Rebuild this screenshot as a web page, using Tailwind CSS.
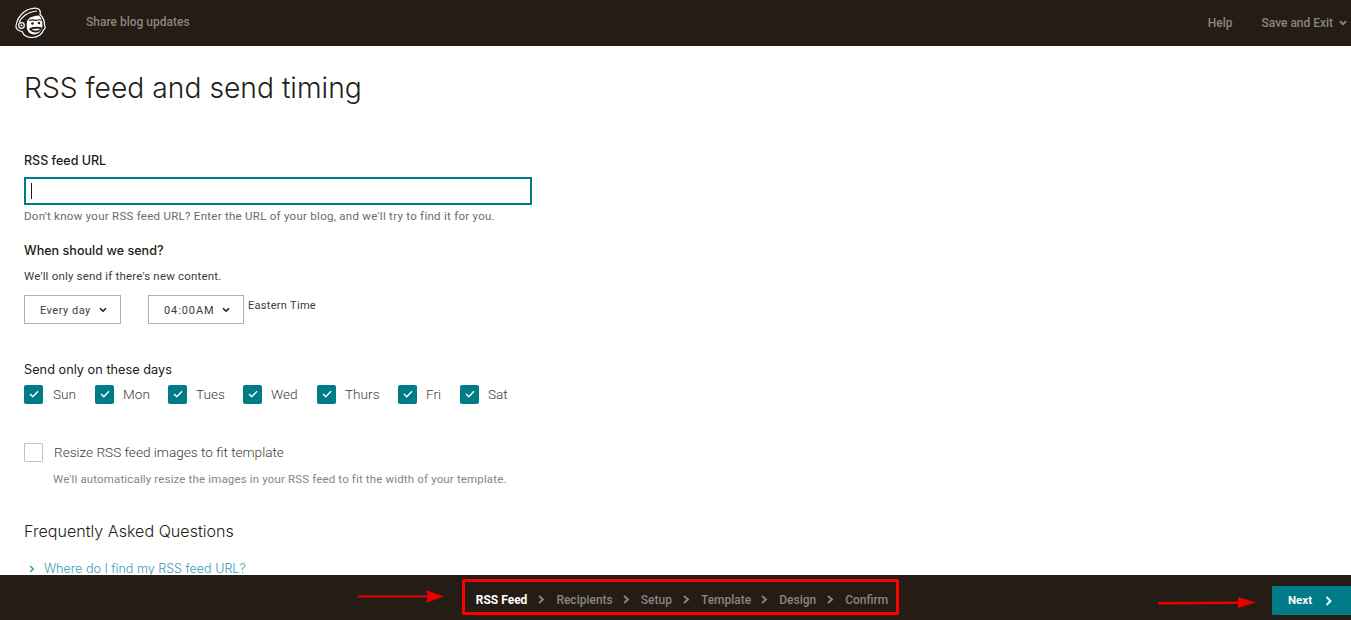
<!DOCTYPE html>
<html lang="en">
<head>
<meta charset="utf-8">
<title>RSS feed and send timing</title>
<script src="https://cdn.jsdelivr.net/npm/@tailwindcss/browser@4"></script>
</head>
<body class="font-['Roboto',sans-serif] bg-white text-[#241c15]">
<div class="relative flex flex-col h-[620px] w-[1351px] overflow-hidden">
  <header class="h-[46px] shrink-0 bg-[#241c15] flex items-center text-[#8a8580] text-[12px] font-medium">
    <svg class="ml-[14px] w-[32px] h-[32px] -mt-[1px]" viewBox="0 0 32 32" fill="none">
      <path d="M8 24.500C4 24 1.500 21.500 2 18.500C2.600 14.500 5 9 10 5C14 2 20 .5 23.500 1.500C26.500 2.500 26.500 5.500 26 7.500C29 10 30.500 14 30.500 18C31.500 20 31 22 29.500 23C28.500 27 24 30.500 18 30.500C13 30.500 9.500 28 8 24.500Z" stroke="#fff" stroke-width="1.200" fill="#241c15"/>
      <path d="M5 15.500C7 10.500 13 5 23 4" stroke="#fff" stroke-width="1.200"/>
      <path d="M14 12.500C17 9.500 21 8.500 25 8.500C27.500 11 28.500 14 28.500 18.500C28 23.500 25 27.500 19.500 27.500C16 27 13.500 25 13 21.500C12.500 18 12.500 14.500 14 12.500Z" fill="#fff"/>
      <path d="M15 13.500C17.500 12.300 20 12.800 22 13.500C24 12.500 26 12.500 28 13.500" stroke="#241c15" stroke-width="1.200"/>
      <circle cx="18.500" cy="16.500" r="1.300" fill="#241c15"/>
      <circle cx="25" cy="16" r="1.300" fill="#241c15"/>
      <path d="M15 22C17 19.500 24 19 28 20.500C27 24.500 24 26 20.500 25.500C18 25 16 24 15 22Z" fill="#241c15"/>
      <path d="M17.500 22.500C20 21.500 24 21.500 26 22C25 23.500 20 24.500 17.500 22.500Z" fill="#fff"/>
      <circle cx="7.500" cy="18.500" r="2.800" stroke="#fff" stroke-width="1.200"/>
      <circle cx="7.500" cy="18.500" r=".9" fill="#fff"/>
    </svg>
    <span class="ml-[40px] -mt-[2px]">Share blog updates</span>
    <div class="ml-auto flex items-center pr-[4px]">
      <span>Help</span>
      <span class="ml-[29px] tracking-[-0.02px]">Save and Exit</span>
      <svg class="ml-[6px] w-[8px] h-[6px]" viewBox="0 0 8 6" fill="none"><path d="M1 1.200L4 4.200L7 1.200" stroke="#8a8580" stroke-width="2"/></svg>
    </div>
  </header>

  <main class="flex-1 min-h-0 overflow-hidden pl-[24px]">
    <h1 class="mt-[23px] text-[28.250px] leading-[38px] font-light font-['Inter',sans-serif]">RSS feed and send timing</h1>

    <label class="block mt-[44px] text-[12.500px] leading-[20px] font-medium font-['Inter',sans-serif]">RSS feed URL</label>
    <div class="mt-[6px] w-[508px] h-[28px] border-2 border-[#007c89] flex items-center pl-[5px]">
      <span class="w-px h-[16px] bg-[#241c15]"></span>
    </div>
    <p class="mt-[2px] text-[11.500px] leading-[18px] text-[#6e6a66] tracking-[0.27px]">Don't know your RSS feed URL? Enter the URL of your blog, and we'll try to find it for you.</p>

    <h2 class="mt-[16px] text-[12.600px] leading-[20px] font-medium font-['Inter',sans-serif]">When should we send?</h2>
    <p class="mt-[6px] text-[11.500px] leading-[18px] text-[#403b37] tracking-[0.19px]">We'll only send if there's new content.</p>

    <div class="mt-[10px] flex items-start text-[11px] text-[#403b37] tracking-[0.3px]">
      <div class="w-[97px] h-[29px] border border-[#b3b0ad] flex items-center pl-[15px]">
        <span class="tracking-[0.5px] pt-[3px]">Every day</span>
        <svg class="ml-[8px] w-[8px] h-[6px]" viewBox="0 0 8 6" fill="none"><path d="M1 1.200L4 4.200L7 1.200" stroke="#241c15" stroke-width="1.600"/></svg>
      </div>
      <div class="ml-[27px] w-[96px] h-[29px] border border-[#b3b0ad] flex items-center pl-[15px]">
        <span class="tracking-[0.9px] pt-[3px]">04:00AM</span>
        <svg class="ml-[8px] w-[8px] h-[6px]" viewBox="0 0 8 6" fill="none"><path d="M1 1.200L4 4.200L7 1.200" stroke="#241c15" stroke-width="1.600"/></svg>
      </div>
      <span class="ml-[4px] leading-[18px] mt-[2px] text-[#403b37]">Eastern Time</span>
    </div>

    <h2 class="mt-[36px] text-[12.750px] leading-[20px] font-['Inter',sans-serif]">Send only on these days</h2>
    <div class="mt-[4px] flex items-center text-[13.600px] leading-[20px] text-[#403b37] font-light">
      <span class="w-[19px] h-[19px] bg-[#007c89] rounded-[2px] flex items-center justify-center"><svg class="w-[10px] h-[8px]" viewBox="0 0 10 8" fill="none"><path d="M1 4L3.800 6.800L9 1.200" stroke="#fff" stroke-width="1.400"/></svg></span>
      <span class="ml-[10px] w-[42px]">Sun</span>
      <span class="w-[19px] h-[19px] bg-[#007c89] rounded-[2px] flex items-center justify-center"><svg class="w-[10px] h-[8px]" viewBox="0 0 10 8" fill="none"><path d="M1 4L3.800 6.800L9 1.200" stroke="#fff" stroke-width="1.400"/></svg></span>
      <span class="ml-[9px] w-[45px]">Mon</span>
      <span class="w-[19px] h-[19px] bg-[#007c89] rounded-[2px] flex items-center justify-center"><svg class="w-[10px] h-[8px]" viewBox="0 0 10 8" fill="none"><path d="M1 4L3.800 6.800L9 1.200" stroke="#fff" stroke-width="1.400"/></svg></span>
      <span class="ml-[9px] w-[47px]">Tues</span>
      <span class="w-[19px] h-[19px] bg-[#007c89] rounded-[2px] flex items-center justify-center"><svg class="w-[10px] h-[8px]" viewBox="0 0 10 8" fill="none"><path d="M1 4L3.800 6.800L9 1.200" stroke="#fff" stroke-width="1.400"/></svg></span>
      <span class="ml-[9px] w-[46px]">Wed</span>
      <span class="w-[19px] h-[19px] bg-[#007c89] rounded-[2px] flex items-center justify-center"><svg class="w-[10px] h-[8px]" viewBox="0 0 10 8" fill="none"><path d="M1 4L3.800 6.800L9 1.200" stroke="#fff" stroke-width="1.400"/></svg></span>
      <span class="ml-[9px] w-[53px]">Thurs</span>
      <span class="w-[19px] h-[19px] bg-[#007c89] rounded-[2px] flex items-center justify-center"><svg class="w-[10px] h-[8px]" viewBox="0 0 10 8" fill="none"><path d="M1 4L3.800 6.800L9 1.200" stroke="#fff" stroke-width="1.400"/></svg></span>
      <span class="ml-[9px] w-[34px]">Fri</span>
      <span class="w-[19px] h-[19px] bg-[#007c89] rounded-[2px] flex items-center justify-center"><svg class="w-[10px] h-[8px]" viewBox="0 0 10 8" fill="none"><path d="M1 4L3.800 6.800L9 1.200" stroke="#fff" stroke-width="1.400"/></svg></span>
      <span class="ml-[9px]">Sat</span>
    </div>

    <div class="mt-[38px] flex items-center">
      <span class="w-[19px] h-[19px] border border-[#c4c2c0] rounded-[1px]"></span>
      <span class="ml-[11px] text-[13.600px] leading-[20px] font-light text-[#403b37]">Resize RSS feed images to fit template</span>
    </div>
    <p class="mt-[8px] ml-[29px] text-[11.500px] leading-[18px] text-[#8a8580] tracking-[0.15px]">We'll automatically resize the images in your RSS feed to fit the width of your template.</p>

    <h2 class="mt-[31px] text-[16.100px] leading-[24px] font-light font-['Inter',sans-serif]">Frequently Asked Questions</h2>
    <div class="mt-[16px] flex items-center text-[12.560px] leading-[20px] text-[#3a9bb8] font-['Inter',sans-serif] font-light">
      <svg class="ml-[5px] w-[6px] h-[8px]" viewBox="0 0 6 8" fill="none"><path d="M1.200 1L4.200 4L1.200 7" stroke="#3a9bb8" stroke-width="1.600"/></svg>
      <span class="ml-[9px]">Where do I find my RSS feed URL?</span>
    </div>
  </main>

  <footer class="relative h-[45px] shrink-0 bg-[#241c15] flex items-center justify-center text-[12px] font-medium text-[#8a8580]">
    <nav class="flex items-center pt-[4px] -mr-[13px]">
      <span class="font-bold text-white">RSS Feed</span>
      <svg class="mx-[11px] w-[7px] h-[9px]" viewBox="0 0 7 9" fill="none"><path d="M1 1L5 4.500L1 8" stroke="#8a8580" stroke-width="1.900"/></svg>
      <span>Recipients</span>
      <svg class="ml-[10px] mr-[11px] w-[7px] h-[9px]" viewBox="0 0 7 9" fill="none"><path d="M1 1L5 4.500L1 8" stroke="#8a8580" stroke-width="1.900"/></svg>
      <span>Setup</span>
      <svg class="mx-[11px] w-[7px] h-[9px]" viewBox="0 0 7 9" fill="none"><path d="M1 1L5 4.500L1 8" stroke="#8a8580" stroke-width="1.900"/></svg>
      <span>Template</span>
      <svg class="ml-[10px] mr-[11px] w-[7px] h-[9px]" viewBox="0 0 7 9" fill="none"><path d="M1 1L5 4.500L1 8" stroke="#8a8580" stroke-width="1.900"/></svg>
      <span>Design</span>
      <svg class="mx-[11px] w-[7px] h-[9px]" viewBox="0 0 7 9" fill="none"><path d="M1 1L5 4.500L1 8" stroke="#8a8580" stroke-width="1.900"/></svg>
      <span>Confirm</span>
    </nav>
    <button class="absolute right-0 top-[11px] w-[79px] h-[29px] bg-[#007c89] rounded-l-[1px] flex items-center pl-[16px] text-white font-bold text-[11.500px]">
      Next
      <svg class="ml-[13px] w-[7px] h-[10px]" viewBox="0 0 7 10" fill="none"><path d="M1.500 1L5.500 5L1.500 9" stroke="#fff" stroke-width="1.800"/></svg>
    </button>
  </footer>

  <div class="absolute left-[462px] top-[579px] w-[437px] h-[36px] border-[3px] border-[#ff0000] rounded-[2px]"></div>
  <svg class="absolute left-[358px] top-[590px] w-[86px] h-[13px]" viewBox="0 0 86 13"><path d="M0 5.500H70V7.500H0Z" fill="#e60000"/><path d="M68 0L86 6.500L68 13L70 6.500Z" fill="#e60000"/></svg>
  <svg class="absolute left-[1158px] top-[596px] w-[98px] h-[13px]" viewBox="0 0 98 13"><path d="M0 6L82 5.500V8L0 8.500Z" fill="#e60000"/><path d="M80 1L98 6.500L80 12Z" fill="#e60000"/></svg>
</div>
</body>
</html>
